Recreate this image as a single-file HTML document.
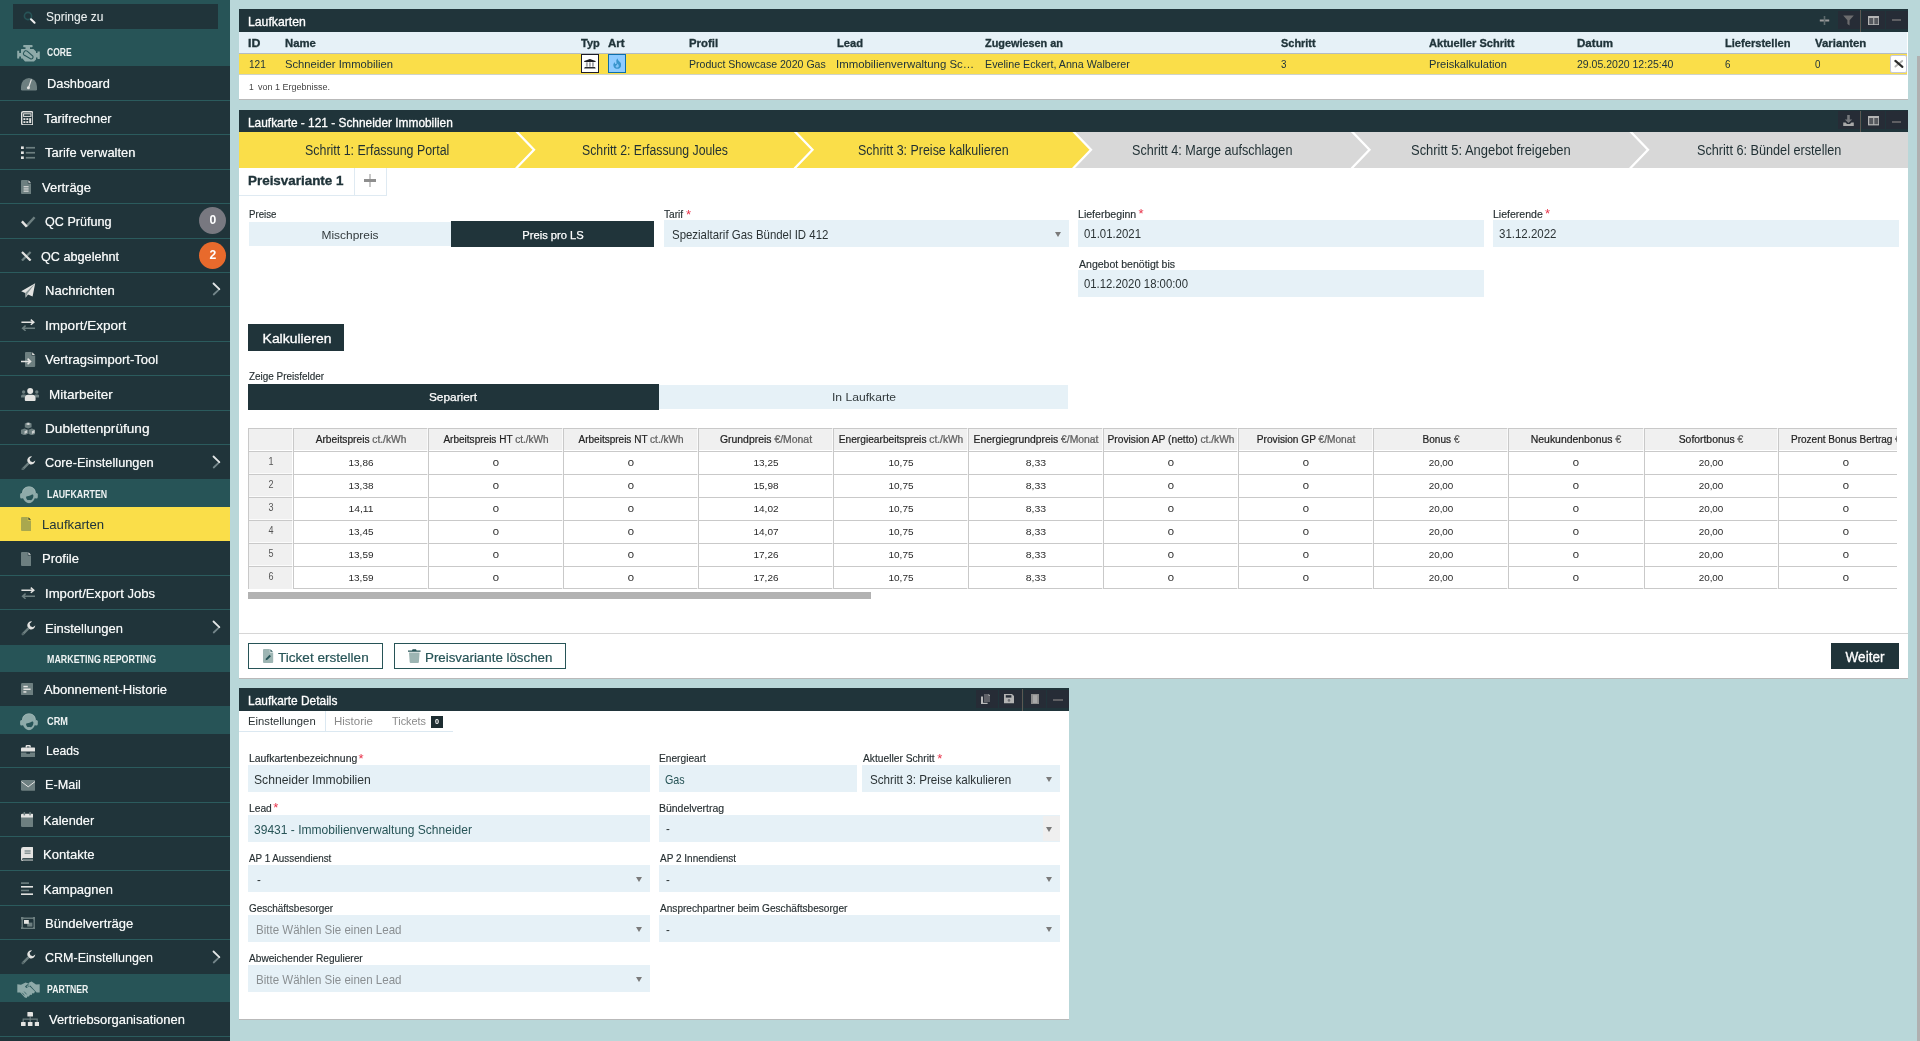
<!DOCTYPE html>
<html lang="de"><head><meta charset="utf-8"><title>Laufkarten</title><style>

html,body{margin:0;padding:0;}
body{width:1920px;height:1041px;overflow:hidden;background:#b9d7d9;font-family:"Liberation Sans",sans-serif;position:relative;}
#r{position:absolute;left:0;top:0;width:1920px;height:1041px;overflow:hidden;will-change:transform;}
#r div,#r svg,#r span.t{position:absolute;}
#r div{box-sizing:border-box;}
span.t{white-space:nowrap;line-height:1;display:block;}
span.g{color:#777;}
span.a{color:#e8334a;}

</style></head><body><div id="r">
<div style="left:0px;top:0px;width:230px;height:1041px;background:#20343a;"></div>
<div style="left:0px;top:0px;width:230px;height:66px;background:#275457;"></div>
<div style="left:13px;top:4px;width:205px;height:25px;background:#20343a;"></div>
<div style="left:0px;top:38px;width:230px;height:28px;background:#275457;"></div>
<div style="left:0px;top:99.5px;width:230px;height:1px;background:#2b5b5d;"></div>
<div style="left:0px;top:134px;width:230px;height:1px;background:#2b5b5d;"></div>
<div style="left:0px;top:168.5px;width:230px;height:1px;background:#2b5b5d;"></div>
<div style="left:0px;top:203px;width:230px;height:1px;background:#2b5b5d;"></div>
<div style="left:0px;top:237.5px;width:230px;height:1px;background:#2b5b5d;"></div>
<div style="left:0px;top:272px;width:230px;height:1px;background:#2b5b5d;"></div>
<div style="left:0px;top:306.25px;width:230px;height:1px;background:#2b5b5d;"></div>
<div style="left:0px;top:340.5px;width:230px;height:1px;background:#2b5b5d;"></div>
<div style="left:0px;top:375px;width:230px;height:1px;background:#2b5b5d;"></div>
<div style="left:0px;top:409.5px;width:230px;height:1px;background:#2b5b5d;"></div>
<div style="left:0px;top:444px;width:230px;height:1px;background:#2b5b5d;"></div>
<div style="left:0px;top:479.25px;width:230px;height:28px;background:#275457;"></div>
<div style="left:0px;top:507.25px;width:230px;height:33.95px;background:#fade49;"></div>
<div style="left:0px;top:574.75px;width:230px;height:1px;background:#2b5b5d;"></div>
<div style="left:0px;top:609.25px;width:230px;height:1px;background:#2b5b5d;"></div>
<div style="left:0px;top:644.5px;width:230px;height:27.75px;background:#275457;"></div>
<div style="left:0px;top:706.25px;width:230px;height:28px;background:#275457;"></div>
<div style="left:0px;top:767px;width:230px;height:1px;background:#2b5b5d;"></div>
<div style="left:0px;top:801.5px;width:230px;height:1px;background:#2b5b5d;"></div>
<div style="left:0px;top:836px;width:230px;height:1px;background:#2b5b5d;"></div>
<div style="left:0px;top:870.25px;width:230px;height:1px;background:#2b5b5d;"></div>
<div style="left:0px;top:904.5px;width:230px;height:1px;background:#2b5b5d;"></div>
<div style="left:0px;top:939.25px;width:230px;height:1px;background:#2b5b5d;"></div>
<div style="left:0px;top:974.25px;width:230px;height:28px;background:#275457;"></div>
<div style="left:0px;top:1036px;width:230px;height:1px;background:#2b5b5d;"></div>
<div style="left:199px;top:207px;width:27px;height:27px;border-radius:50%;background:#787880;"></div>
<div style="left:199px;top:241.5px;width:27px;height:27px;border-radius:50%;background:#e86a2c;"></div>
<div style="left:1917px;top:56px;width:3px;height:985px;background:#b0b0b0;"></div>
<div style="left:239px;top:9px;width:1669px;height:91px;background:#fff;border-bottom:1px solid #b9b9b9;"></div>
<div style="left:239px;top:9px;width:1669px;height:22.75px;background:#20343a;"></div>
<div style="left:1838px;top:11.25px;width:22px;height:17.7px;background:#262c36;"></div>
<div style="left:1860.4px;top:10px;width:1px;height:21.7px;background:#5c5853;"></div>
<div style="left:1861.5px;top:11.25px;width:23.5px;height:17.7px;background:#262c36;"></div>
<div style="left:1886px;top:11.25px;width:22px;height:17.7px;background:#262c36;"></div>
<div style="left:1892px;top:19.4px;width:9px;height:2px;background:#5f5f63;"></div>
<div style="left:239px;top:31.75px;width:1667.6px;height:22px;background:#e6f1f7;border-bottom:1px solid #b4bcc2;"></div>
<div style="left:239px;top:53.75px;width:1667.6px;height:21.25px;background:#fade49;border-bottom:1px solid #cfd3c9;"></div>
<div style="left:581px;top:54.2px;width:18px;height:18.6px;background:#fff;border:1px solid #1c1c26;"></div>
<div style="left:608px;top:54.2px;width:18px;height:18.6px;background:#8ecbff;border:1px solid #0d6eaa;"></div>
<div style="left:1889.5px;top:55.4px;width:17.5px;height:17.3px;background:#fff;border:1px solid #c6c9d8;border-radius:2px;"></div>
<div style="left:239px;top:110px;width:1669px;height:568.6px;background:#fff;border-bottom:1px solid #b9b9b9;"></div>
<div style="left:239px;top:110px;width:1669px;height:22px;background:#20343a;"></div>
<div style="left:1838px;top:111.4px;width:22px;height:17.4px;background:#262c36;"></div>
<div style="left:1860.4px;top:111px;width:1px;height:21px;background:#5c5853;"></div>
<div style="left:1861.5px;top:111.4px;width:23.5px;height:17.4px;background:#262c36;"></div>
<div style="left:1886px;top:111.4px;width:22px;height:17.4px;background:#262c36;"></div>
<div style="left:1892px;top:120.7px;width:9px;height:2px;background:#5f5f63;"></div>
<div style="left:239px;top:132px;width:835px;height:35.5px;background:#fade49;"></div>
<div style="left:1074px;top:132px;width:834px;height:35.5px;background:#d8d8d8;"></div>
<div style="left:239px;top:167.5px;width:115.5px;height:28.6px;background:#fff;border-right:1px solid #dfeaf2;border-bottom:1px solid #dfeaf2;"></div>
<div style="left:354.5px;top:167.5px;width:32px;height:28.6px;background:#fff;border-right:1px solid #dfeaf2;border-bottom:1px solid #dfeaf2;"></div>
<div style="left:368.8px;top:174.1px;width:2.6px;height:13px;background:#c8c8c8;"></div>
<div style="left:364px;top:178.9px;width:12.1px;height:3px;background:#8e8e8e;"></div>
<div style="left:249px;top:222px;width:202px;height:23.75px;background:#e6f1f7;"></div>
<div style="left:451px;top:220.75px;width:203px;height:26px;background:#20343a;"></div>
<div style="left:663.5px;top:220px;width:405.5px;height:26.8px;background:#e6f1f7;"></div>
<div style="left:1078px;top:220px;width:405.7px;height:26.8px;background:#e6f1f7;"></div>
<div style="left:1492.7px;top:220px;width:406.3px;height:26.8px;background:#e6f1f7;"></div>
<div style="left:1078px;top:269.9px;width:405.7px;height:26.9px;background:#e6f1f7;"></div>
<div style="left:248.25px;top:324.25px;width:95.75px;height:26.5px;background:#20343a;"></div>
<div style="left:248.25px;top:384.25px;width:410.75px;height:25.25px;background:#20343a;"></div>
<div style="left:659px;top:385.25px;width:409px;height:23.5px;background:#e6f1f7;"></div>
<div style="left:248px;top:428px;width:1649px;height:162px;overflow:hidden;"><div style="left:0;top:0.2px;width:1700px;height:21.7px;background:#f0f0f0;border-top:1px solid #c9c9c9;"></div><div style="left:0;top:23.8px;width:44.2px;height:137px;background:#f0f0f0;"></div><div style="left:0;top:23.2px;width:1700px;height:1px;background:#c9c9c9;"></div><div style="left:0;top:46.2px;width:1700px;height:1px;background:#c9c9c9;"></div><div style="left:0;top:45.2px;width:44.2px;height:1px;background:#fbfbfb;"></div><div style="left:0;top:69.3px;width:1700px;height:1px;background:#c9c9c9;"></div><div style="left:0;top:68.3px;width:44.2px;height:1px;background:#fbfbfb;"></div><div style="left:0;top:92.3px;width:1700px;height:1px;background:#c9c9c9;"></div><div style="left:0;top:91.3px;width:44.2px;height:1px;background:#fbfbfb;"></div><div style="left:0;top:115.4px;width:1700px;height:1px;background:#c9c9c9;"></div><div style="left:0;top:114.4px;width:44.2px;height:1px;background:#fbfbfb;"></div><div style="left:0;top:138.4px;width:1700px;height:1px;background:#c9c9c9;"></div><div style="left:0;top:137.4px;width:44.2px;height:1px;background:#fbfbfb;"></div><div style="left:0;top:160.4px;width:1700px;height:1px;background:#c9c9c9;"></div><div style="left:0;top:160.4px;width:45.2px;height:1px;background:#f0f0f0;"></div><div style="left:0.2px;top:0;width:1px;height:161px;background:#c9c9c9;"></div><div style="left:44.4px;top:0;width:1px;height:161.4px;background:rgba(255,255,255,.65);"></div><div style="left:45.4px;top:0;width:1px;height:161.4px;background:#c9c9c9;"></div><div style="left:179.3px;top:0;width:1px;height:161.4px;background:rgba(255,255,255,.65);"></div><div style="left:180.3px;top:0;width:1px;height:161.4px;background:#c9c9c9;"></div><div style="left:314.3px;top:0;width:1px;height:161.4px;background:rgba(255,255,255,.65);"></div><div style="left:315.3px;top:0;width:1px;height:161.4px;background:#c9c9c9;"></div><div style="left:449.3px;top:0;width:1px;height:161.4px;background:rgba(255,255,255,.65);"></div><div style="left:450.3px;top:0;width:1px;height:161.4px;background:#c9c9c9;"></div><div style="left:584.3px;top:0;width:1px;height:161.4px;background:rgba(255,255,255,.65);"></div><div style="left:585.3px;top:0;width:1px;height:161.4px;background:#c9c9c9;"></div><div style="left:719.2px;top:0;width:1px;height:161.4px;background:rgba(255,255,255,.65);"></div><div style="left:720.2px;top:0;width:1px;height:161.4px;background:#c9c9c9;"></div><div style="left:854.3px;top:0;width:1px;height:161.4px;background:rgba(255,255,255,.65);"></div><div style="left:855.3px;top:0;width:1px;height:161.4px;background:#c9c9c9;"></div><div style="left:989.4px;top:0;width:1px;height:161.4px;background:rgba(255,255,255,.65);"></div><div style="left:990.4px;top:0;width:1px;height:161.4px;background:#c9c9c9;"></div><div style="left:1124.3px;top:0;width:1px;height:161.4px;background:rgba(255,255,255,.65);"></div><div style="left:1125.3px;top:0;width:1px;height:161.4px;background:#c9c9c9;"></div><div style="left:1259.4px;top:0;width:1px;height:161.4px;background:rgba(255,255,255,.65);"></div><div style="left:1260.4px;top:0;width:1px;height:161.4px;background:#c9c9c9;"></div><div style="left:1394.5px;top:0;width:1px;height:161.4px;background:rgba(255,255,255,.65);"></div><div style="left:1395.5px;top:0;width:1px;height:161.4px;background:#c9c9c9;"></div><div style="left:1529.4px;top:0;width:1px;height:161.4px;background:rgba(255,255,255,.65);"></div><div style="left:1530.4px;top:0;width:1px;height:161.4px;background:#c9c9c9;"></div></div>
<div style="left:248px;top:591.5px;width:623px;height:7px;background:#b2b2b2;"></div>
<div style="left:239px;top:633px;width:1669px;height:1px;background:#d6d6d6;"></div>
<div style="left:248.25px;top:643.25px;width:134.5px;height:25.25px;background:#fff;border:1px solid #275457;"></div>
<div style="left:394.25px;top:643.25px;width:171.5px;height:25.25px;background:#fff;border:1px solid #275457;"></div>
<div style="left:1831.3px;top:643px;width:67.7px;height:25.5px;background:#20343a;"></div>
<div style="left:239px;top:688px;width:830px;height:331.7px;background:#fff;border-bottom:1px solid #b9b9b9;"></div>
<div style="left:239px;top:688px;width:830px;height:22.8px;background:#20343a;"></div>
<div style="left:976px;top:690.2px;width:22px;height:17.6px;background:#262c36;"></div>
<div style="left:999px;top:690.2px;width:23px;height:17.6px;background:#262c36;"></div>
<div style="left:1022.4px;top:689px;width:1px;height:21.8px;background:#5c5853;"></div>
<div style="left:1023.5px;top:690.2px;width:22.5px;height:17.6px;background:#262c36;"></div>
<div style="left:1047px;top:690.2px;width:22px;height:17.6px;background:#262c36;"></div>
<div style="left:1053px;top:698.6px;width:10px;height:2px;background:#5f5f63;"></div>
<div style="left:239px;top:710.8px;width:214px;height:21px;background:#fff;border-bottom:1px solid #dbe8f1;"></div>
<div style="left:325px;top:710.8px;width:1px;height:21px;background:#dbe8f1;"></div>
<div style="left:431px;top:716.2px;width:11.8px;height:11.6px;background:#1d2d31;"></div>
<div style="left:248.2px;top:765.3px;width:401.6px;height:26.5px;background:#e6f1f7;"></div>
<div style="left:659.1px;top:765.3px;width:197.9px;height:26.5px;background:#e6f1f7;"></div>
<div style="left:862px;top:765.3px;width:198px;height:26.5px;background:#e6f1f7;"></div>
<div style="left:248.2px;top:815px;width:401.6px;height:26.6px;background:#e6f1f7;"></div>
<div style="left:659.1px;top:815px;width:400.9px;height:26.6px;background:#e6f1f7;"></div>
<div style="left:1043px;top:816px;width:17px;height:25px;background:#efefef;"></div>
<div style="left:248.2px;top:864.8px;width:401.6px;height:26.8px;background:#e6f1f7;"></div>
<div style="left:659.1px;top:864.8px;width:400.9px;height:26.8px;background:#e6f1f7;"></div>
<div style="left:248.2px;top:915px;width:401.6px;height:26.5px;background:#e6f1f7;"></div>
<div style="left:659.1px;top:915px;width:400.9px;height:26.5px;background:#e6f1f7;"></div>
<div style="left:248.2px;top:965.1px;width:401.6px;height:26.5px;background:#e6f1f7;"></div>
<svg style="left:22px;top:10px;" width="16" height="16" viewBox="0 0 16 16"><circle cx="6" cy="6" r="3.6" fill="none" stroke="#275457" stroke-width="1.6"/><path d="M9 9.2 L12.6 12.8" stroke="#f0f0f0" stroke-width="2" stroke-linecap="round"/></svg>
<svg style="left:211.3px;top:281.2px;" width="12" height="16" viewBox="0 0 12 16"><path d="M8.4 8.2 L2.7 13.5" fill="none" stroke="#74868a" stroke-width="1.8" stroke-linecap="round"/><path d="M2.5 2.5 L8.3 8.1" fill="none" stroke="#e2e6e6" stroke-width="1.8" stroke-linecap="round"/></svg>
<svg style="left:211.3px;top:453.7px;" width="12" height="16" viewBox="0 0 12 16"><path d="M8.4 8.2 L2.7 13.5" fill="none" stroke="#74868a" stroke-width="1.8" stroke-linecap="round"/><path d="M2.5 2.5 L8.3 8.1" fill="none" stroke="#e2e6e6" stroke-width="1.8" stroke-linecap="round"/></svg>
<svg style="left:211.3px;top:619.2px;" width="12" height="16" viewBox="0 0 12 16"><path d="M8.4 8.2 L2.7 13.5" fill="none" stroke="#74868a" stroke-width="1.8" stroke-linecap="round"/><path d="M2.5 2.5 L8.3 8.1" fill="none" stroke="#e2e6e6" stroke-width="1.8" stroke-linecap="round"/></svg>
<svg style="left:211.3px;top:949.2px;" width="12" height="16" viewBox="0 0 12 16"><path d="M8.4 8.2 L2.7 13.5" fill="none" stroke="#74868a" stroke-width="1.8" stroke-linecap="round"/><path d="M2.5 2.5 L8.3 8.1" fill="none" stroke="#e2e6e6" stroke-width="1.8" stroke-linecap="round"/></svg>
<svg style="left:17px;top:45px;" width="23" height="17" viewBox="0 0 23 17"><g fill="#8eaaa9"><rect x="6.2" y="0" width="9.4" height="2.3" rx=".7"/><rect x="8.5" y="2" width="4.5" height="2.2"/><path d="M4.5 4 H16.5 L19 6.5 V8 H20.5 V6.5 H22.8 V14 H20.5 V12.5 H19 V14.5 L17 16.5 H8 L5.5 13.5 H4 V11.5 H2.2 V13.5 H0.2 V5.8 H2.2 V8 H4 V4.5Z"/></g><path d="M7 7.2 a2 2 0 0 1 3.2 -1 L15.8 11 a2 2 0 0 1 -2 3 L8 10.6 A2 2 0 0 1 7 7.2Z" fill="none" stroke="#275457" stroke-width="1.1"/></svg>
<svg style="left:19.5px;top:485.5px;" width="18" height="18" viewBox="0 0 18 18"><g fill="#8eaaa9"><path d="M9 0.4 C4.6 0.4 2 3.4 2 7.6 C2 12 5 17.2 9 17.2 C13 17.2 15.8 12 15.8 7.6 C15.8 3.4 13.4 0.4 9 0.4Z"/><rect x="0.1" y="7" width="3.2" height="5.6" rx="1.5"/><rect x="14.6" y="7" width="3.2" height="5.6" rx="1.5"/></g><path d="M9 0.9 C5 0.9 2.8 3.4 2.6 7" fill="none" stroke="#a6bcbb" stroke-width=".6"/><path d="M9 0.9 C13 0.9 15 3.4 15.2 7" fill="none" stroke="#a6bcbb" stroke-width=".6"/><path d="M6 10.8 C7.6 9.8 9.6 10 11.6 8.7 C12.6 8.2 13.4 8.7 13.4 9.8 C13.4 12.2 11.6 14.9 9.4 14.9 C7.4 14.9 6 12.8 6 10.8Z" fill="#275457"/><ellipse cx="9.1" cy="15.4" rx="2.3" ry="1.35" fill="#8eaaa9"/></svg>
<svg style="left:19.5px;top:712.5px;" width="18" height="18" viewBox="0 0 18 18"><g fill="#8eaaa9"><path d="M9 0.4 C4.6 0.4 2 3.4 2 7.6 C2 12 5 17.2 9 17.2 C13 17.2 15.8 12 15.8 7.6 C15.8 3.4 13.4 0.4 9 0.4Z"/><rect x="0.1" y="7" width="3.2" height="5.6" rx="1.5"/><rect x="14.6" y="7" width="3.2" height="5.6" rx="1.5"/></g><path d="M9 0.9 C5 0.9 2.8 3.4 2.6 7" fill="none" stroke="#a6bcbb" stroke-width=".6"/><path d="M9 0.9 C13 0.9 15 3.4 15.2 7" fill="none" stroke="#a6bcbb" stroke-width=".6"/><path d="M6 10.8 C7.6 9.8 9.6 10 11.6 8.7 C12.6 8.2 13.4 8.7 13.4 9.8 C13.4 12.2 11.6 14.9 9.4 14.9 C7.4 14.9 6 12.8 6 10.8Z" fill="#275457"/><ellipse cx="9.1" cy="15.4" rx="2.3" ry="1.35" fill="#8eaaa9"/></svg>
<svg style="left:17px;top:980.5px;" width="23" height="18" viewBox="0 0 23 18"><g fill="#8eaaa9"><path d="M0.3 3.2 L4 3.8 L8.6 1.6 L11.4 2.6 L8 5.6 L9.2 7 L12.6 5.2 L18 10.6 L17 12.4 L15.6 12 L14.6 14 L13 13.8 L12 15.6 L10.4 15.4 L9.6 17 L7.8 16.6 L3.2 11.4 L0.3 11.6Z"/><path d="M12.2 1.4 L14.6 0.6 L19 3.6 L22.7 3.2 V11.6 L19.6 11.4 L13.2 4.6 L10 6.2 L9.4 5.6Z"/></g><path d="M9.4 5.6 L12.2 3.4 M5.2 11.8 L7.4 14.4 M7.2 10.6 L9.6 13.4" stroke="#275457" stroke-width=".7" fill="none"/></svg>
<svg style="left:21px;top:77px;" width="16" height="13.5" viewBox="0 0 16 13.5"><path d="M0 9.6 A8 8.6 0 0 1 16 9.6 V12.2 A1.2 1.2 0 0 1 14.8 13.4 H1.2 A1.2 1.2 0 0 1 0 12.2Z" fill="#6d7f80"/><path d="M10.4 2.4 L7.6 10.6" stroke="#e4e4e2" stroke-width="1.2"/><circle cx="7.4" cy="10.8" r="1.5" fill="#e4e4e2"/></svg>
<svg style="left:20.8px;top:110.8px;" width="12.6" height="14.6" viewBox="0 0 12.6 14.6"><rect x=".7" y=".7" width="11.2" height="13.2" rx="1.4" fill="#20343a" stroke="#e4e4e2" stroke-width="1.4"/><rect x="2.6" y="2.8" width="7.4" height="2.6" fill="#20343a" stroke="#e4e4e2" stroke-width="1"/><g fill="#e4e4e2"><rect x="2.4" y="7.2" width="2" height="1.8"/><rect x="5.3" y="7.2" width="2" height="1.8"/><rect x="8.2" y="7.2" width="2" height="4.8"/><rect x="2.4" y="10.2" width="2" height="1.8"/><rect x="5.3" y="10.2" width="2" height="1.8"/></g></svg>
<svg style="left:21px;top:146px;" width="14.4" height="13.4" viewBox="0 0 14.4 13.4"><g fill="#e4e4e2"><rect x="0" y="0.4" width="2.8" height="2.6"/><rect x="0" y="5.4" width="2.8" height="2.6"/><rect x="0" y="10.4" width="2.8" height="2.6"/></g><g fill="#6d7f80"><rect x="4.8" y="0.9" width="9.4" height="1.7"/><rect x="4.8" y="5.9" width="9.4" height="1.7"/><rect x="4.8" y="10.9" width="9.4" height="1.7"/></g></svg>
<svg style="left:21px;top:180px;" width="10.4" height="14.2" viewBox="0 0 10.4 14.2"><path d="M1 0 H6.8 V3.4 H10.2 V13 A1 1 0 0 1 9.2 14 H1 A1 1 0 0 1 0 13 V1 A1 1 0 0 1 1 0Z" fill="#6d7f80"/><path d="M7.4 0.2 L10 2.8 H7.4Z" fill="#e4e4e2"/><g fill="#e4e4e2"><rect x="2.6" y="6.2" width="5" height="1.1"/><rect x="2.6" y="8.4" width="5" height="1.1"/><rect x="2.6" y="10.6" width="5" height="1.1"/></g></svg>
<svg style="left:21px;top:215.6px;" width="14.6" height="12" viewBox="0 0 14.6 12"><path d="M5.2 10.4 L13.6 1.2" stroke="#6d7f80" stroke-width="2.4" fill="none"/><path d="M0.9 5.4 L5.8 10.6" stroke="#e4e4e2" stroke-width="2.4" fill="none"/></svg>
<svg style="left:21px;top:250.8px;" width="10.6" height="10.6" viewBox="0 0 10.6 10.6"><path d="M9.6 1 L1 9.6" stroke="#6d7f80" stroke-width="2.2"/><path d="M1 1 L9.6 9.6" stroke="#e4e4e2" stroke-width="2.2"/></svg>
<svg style="left:21px;top:282.6px;" width="14.6" height="15.4" viewBox="0 0 14.6 15.4"><path d="M14.2 0.2 L0.2 8.2 L4.2 10 L4.6 14.8 L7 11.4 L11.6 13.4Z" fill="#e4e4e2"/><path d="M14.2 0.2 L4.2 10 L4.6 14.8 L6.4 10.8Z" fill="#6d7f80" opacity=".75"/></svg>
<svg style="left:21px;top:319px;" width="14.4" height="12.4" viewBox="0 0 14.4 12.4"><path d="M0.4 3.2 H12.4 M9.8 0.6 L12.8 3.2 L9.8 5.8" stroke="#e4e4e2" stroke-width="1.5" fill="none"/><path d="M14 9.2 H2 M4.6 6.6 L1.6 9.2 L4.6 11.8" stroke="#6d7f80" stroke-width="1.5" fill="none"/></svg>
<svg style="left:21px;top:352px;" width="14.6" height="15" viewBox="0 0 14.6 15"><path d="M5 0 H10.6 V3.6 H14.2 V14 A1 1 0 0 1 13.2 15 H5 A1 1 0 0 1 4 14 V1 A1 1 0 0 1 5 0Z" fill="#6d7f80"/><path d="M11.2 0.2 L14 3 H11.2Z" fill="#e4e4e2"/><path d="M0 9.4 H9 M6.6 6.6 L9.6 9.4 L6.6 12.2" stroke="#e4e4e2" stroke-width="1.5" fill="none"/></svg>
<svg style="left:21px;top:387.6px;" width="18.4" height="13" viewBox="0 0 18.4 13"><g fill="#6d7f80"><circle cx="2.6" cy="4" r="1.7"/><circle cx="15.8" cy="4" r="1.7"/><path d="M0 9.4 V8.2 A1.8 1.8 0 0 1 1.8 6.4 H4.6 V9.4Z"/><path d="M18.4 9.4 V8.2 A1.8 1.8 0 0 0 16.6 6.4 H13.8 V9.4Z"/></g><g fill="#e4e4e2"><circle cx="9.2" cy="3.1" r="3"/><path d="M3.8 12 V10.2 A3.4 3.4 0 0 1 7.2 6.8 H11.2 A3.4 3.4 0 0 1 14.6 10.2 V12 A1 1 0 0 1 13.6 13 H4.8 A1 1 0 0 1 3.8 12Z"/></g></svg>
<svg style="left:21px;top:421.8px;" width="14.4" height="13.6" viewBox="0 0 14.4 13.6"><g fill="#6d7f80"><path d="M7.2 0 L10.6 1.4 V5.2 L7.2 6.6 L3.8 5.2 V1.4Z"/><path d="M3.5 6.4 L7 7.8 V11.8 L3.5 13.4 L0 11.8 V7.8Z"/><path d="M10.9 6.4 L14.4 7.8 V11.8 L10.9 13.4 L7.4 11.8 V7.8Z"/></g><g fill="#e4e4e2"><path d="M7.2 1 L9.6 2 L7.2 3 L4.8 2Z"/><path d="M3.5 9.2 L6.2 8 V10.8 L3.5 12Z" opacity=".8"/><path d="M10.9 9.2 L13.6 8 V10.8 L10.9 12Z" opacity=".8"/></g></svg>
<svg style="left:21px;top:455.6px;" width="14.6" height="14.8" viewBox="0 0 14.6 14.8"><path d="M7.6 5.6 L9.2 7.2 L2.6 13.9 A1.15 1.15 0 0 1 0.9 12.3Z" fill="#6d7f80"/><circle cx="2" cy="12.9" r=".6" fill="#20343a"/><path d="M10.2 0.3 A4.2 4.2 0 0 0 6.4 5.6 L8.8 8.2 A4.2 4.2 0 0 0 14.3 4.4 L11.8 6.2 L9.4 5.2 L8.6 2.8 L11 0.4Z" fill="#e4e4e2"/></svg>
<svg style="left:21px;top:517px;" width="10.4" height="14.2" viewBox="0 0 10.4 14.2"><path d="M1 0 H6.8 V3.4 H10.2 V13 A1 1 0 0 1 9.2 14 H1 A1 1 0 0 1 0 13 V1 A1 1 0 0 1 1 0Z" fill="#a9a84e"/><path d="M7.4 0.2 L10 2.8 H7.4Z" fill="#20343a"/></svg>
<svg style="left:21px;top:552px;" width="10.4" height="14.2" viewBox="0 0 10.4 14.2"><path d="M1 0 H6.8 V3.4 H10.2 V13 A1 1 0 0 1 9.2 14 H1 A1 1 0 0 1 0 13 V1 A1 1 0 0 1 1 0Z" fill="#6d7f80"/><path d="M7.4 0.2 L10 2.8 H7.4Z" fill="#e4e4e2"/></svg>
<svg style="left:21px;top:586.8px;" width="14.4" height="12.4" viewBox="0 0 14.4 12.4"><path d="M0.4 3.2 H12.4 M9.8 0.6 L12.8 3.2 L9.8 5.8" stroke="#e4e4e2" stroke-width="1.5" fill="none"/><path d="M14 9.2 H2 M4.6 6.6 L1.6 9.2 L4.6 11.8" stroke="#6d7f80" stroke-width="1.5" fill="none"/></svg>
<svg style="left:21px;top:621px;" width="14.6" height="14.8" viewBox="0 0 14.6 14.8"><path d="M7.6 5.6 L9.2 7.2 L2.6 13.9 A1.15 1.15 0 0 1 0.9 12.3Z" fill="#6d7f80"/><circle cx="2" cy="12.9" r=".6" fill="#20343a"/><path d="M10.2 0.3 A4.2 4.2 0 0 0 6.4 5.6 L8.8 8.2 A4.2 4.2 0 0 0 14.3 4.4 L11.8 6.2 L9.4 5.2 L8.6 2.8 L11 0.4Z" fill="#e4e4e2"/></svg>
<svg style="left:21px;top:683px;" width="12.4" height="12.4" viewBox="0 0 12.4 12.4"><rect width="12.4" height="12.4" rx="1.4" fill="#6d7f80"/><g fill="#e4e4e2"><rect x="2.4" y="2.8" width="4.4" height="1.5"/><rect x="2.4" y="5.5" width="7.2" height="1.5"/><rect x="2.4" y="8.2" width="3" height="1.5"/></g></svg>
<svg style="left:21px;top:744.6px;" width="14.4" height="12.6" viewBox="0 0 14.4 12.6"><path d="M4.6 2.6 V1.2 A1.2 1.2 0 0 1 5.8 0 H8.6 A1.2 1.2 0 0 1 9.8 1.2 V2.6 H8.4 V1.4 H6 V2.6Z" fill="#e4e4e2"/><path d="M1.2 2.6 H13.2 A1.2 1.2 0 0 1 14.4 3.8 V6.6 H0 V3.8 A1.2 1.2 0 0 1 1.2 2.6Z" fill="#e4e4e2"/><path d="M0 7.6 H5.4 V8.8 H9 V7.6 H14.4 V11.4 A1.2 1.2 0 0 1 13.2 12.6 H1.2 A1.2 1.2 0 0 1 0 11.4Z" fill="#6d7f80"/></svg>
<svg style="left:21px;top:779.8px;" width="14.4" height="10.8" viewBox="0 0 14.4 10.8"><rect width="14.4" height="10.8" rx="1.2" fill="#6d7f80"/><path d="M0.4 1.6 L7.2 6.8 L14 1.6" fill="none" stroke="#e4e4e2" stroke-width="1"/></svg>
<svg style="left:21px;top:812px;" width="12.4" height="15" viewBox="0 0 12.4 15"><rect x="0" y="4.6" width="12.4" height="10.4" rx="1.2" fill="#6d7f80"/><path d="M0 5.4 V3 A1.2 1.2 0 0 1 1.2 1.8 H11.2 A1.2 1.2 0 0 1 12.4 3 V5.4Z" fill="#e4e4e2"/><rect x="2.6" y="0" width="1.5" height="3.4" fill="#6d7f80"/><rect x="8.3" y="0" width="1.5" height="3.4" fill="#6d7f80"/></svg>
<svg style="left:21px;top:847px;" width="12.4" height="14.4" viewBox="0 0 12.4 14.4"><path d="M2.4 0 H11.4 A1 1 0 0 1 12.4 1 V11 H2.4 A1.2 1.2 0 0 0 2.4 13.4 H12.4 V14.4 H2.4 A2.4 2.4 0 0 1 0 12 V2.4 A2.4 2.4 0 0 1 2.4 0Z" fill="#e4e4e2"/><rect x="3.6" y="3.4" width="6" height="1.2" fill="#6d7f80"/><rect x="3.6" y="5.6" width="6" height="1.2" fill="#6d7f80"/><rect x="1.8" y="11.6" width="10.6" height="1.4" fill="#6d7f80"/></svg>
<svg style="left:21px;top:882px;" width="12.4" height="13.4" viewBox="0 0 12.4 13.4"><rect x="0" y="0.3" width="8" height="1.6" fill="#6d7f80"/><rect x="0" y="4" width="12.2" height="1.6" fill="#e4e4e2"/><rect x="0" y="7.7" width="8" height="1.6" fill="#6d7f80"/><rect x="0" y="11.4" width="12.2" height="1.6" fill="#e4e4e2"/></svg>
<svg style="left:21px;top:916.8px;" width="14.4" height="12.6" viewBox="0 0 14.4 12.6"><rect x="1.2" y="1.2" width="12" height="10.2" fill="none" stroke="#6d7f80" stroke-width="1.4"/><g fill="#6d7f80"><rect width="2.4" height="2.4"/><rect x="12" width="2.4" height="2.4"/><rect y="10.2" width="2.4" height="2.4"/><rect x="12" y="10.2" width="2.4" height="2.4"/><rect x="6.2" y="5.6" width="5.2" height="4"/></g><rect x="3" y="3" width="4.8" height="3.8" fill="#e4e4e2"/></svg>
<svg style="left:21px;top:950.4px;" width="14.6" height="14.8" viewBox="0 0 14.6 14.8"><path d="M7.6 5.6 L9.2 7.2 L2.6 13.9 A1.15 1.15 0 0 1 0.9 12.3Z" fill="#6d7f80"/><circle cx="2" cy="12.9" r=".6" fill="#20343a"/><path d="M10.2 0.3 A4.2 4.2 0 0 0 6.4 5.6 L8.8 8.2 A4.2 4.2 0 0 0 14.3 4.4 L11.8 6.2 L9.4 5.2 L8.6 2.8 L11 0.4Z" fill="#e4e4e2"/></svg>
<svg style="left:21px;top:1012px;" width="18.4" height="14.4" viewBox="0 0 18.4 14.4"><path d="M9.2 4.4 V10 M2.2 10 V7.2 H16.2 V10" fill="none" stroke="#6d7f80" stroke-width="1.2"/><g fill="#e4e4e2"><rect x="6.4" y="0" width="5.6" height="4.4" rx=".5"/><rect x="0" y="10" width="4.6" height="4" rx=".5"/><rect x="6.9" y="10" width="4.6" height="4" rx=".5"/><rect x="13.8" y="10" width="4.6" height="4" rx=".5"/></g></svg>
<svg style="left:1819px;top:15px;" width="11" height="11" viewBox="0 0 11 11"><path d="M0.8 5.5 H10.2" stroke="#9a9a9a" stroke-width="2"/><path d="M5.5 1 V10" stroke="#5d6a6c" stroke-width="1.6"/></svg>
<svg style="left:1842.5px;top:14.6px;" width="11" height="11" viewBox="0 0 11 11"><path d="M0.2 0.4 H10.8 L6.6 5.2 V10.6 L4.4 9 V5.2Z" fill="#6c6c6e"/></svg>
<svg style="left:1867.8px;top:15.5px;" width="11.4" height="9.4" viewBox="0 0 11.4 9.4"><rect x=".6" y=".6" width="10.2" height="8.2" fill="#55585e" stroke="#b5b5b5" stroke-width="1.2"/><rect x=".6" y=".4" width="10.2" height="1.6" fill="#b5b5b5"/><rect x="5.2" y="1" width="1.1" height="8" fill="#b5b5b5"/></svg>
<svg style="left:584.2px;top:58.8px;" width="11.8" height="9.8" viewBox="0 0 11.8 9.8"><path d="M5.9 0 L11.6 1.9 V2.9 H0.2 V1.9Z" fill="#1d1d24"/><g fill="#a9a9ad"><rect x="1.9" y="3.3" width="1.9" height="4.4"/><rect x="4.95" y="3.3" width="1.9" height="4.4"/><rect x="8" y="3.3" width="1.9" height="4.4"/></g><path d="M1 7.9 H10.8 L11.6 9.1 V9.6 H0.2 V9.1Z" fill="#2a2a30"/></svg>
<svg style="left:612.9px;top:57.8px;" width="8.6" height="11" viewBox="0 0 8.6 11"><path d="M4.6 0.2 C4.4 2 6.4 3 7.6 4.8 C8.8 6.8 8.2 9.2 6.2 10.4 C4.4 11.2 2.2 10.8 1 9.2 C-0.2 7.4 0.4 5.2 1.8 4 C1.6 5.2 2.2 6 3 6 C4.2 5.8 3 3.6 3.4 2.2 C3.6 1.4 4 0.8 4.6 0.2Z" fill="#2f8fc6" opacity=".9"/><path d="M4.4 5.4 C5.2 6.2 6 7 5.8 8.2 C5.6 9.2 4.8 9.6 4 9.6 C3 9.6 2.4 8.8 2.6 8 C2.8 7.4 3.4 7.6 3.8 7 C4.2 6.4 4.2 6 4.4 5.4Z" fill="#8ecbff" opacity=".85"/></svg>
<svg style="left:1893.5px;top:59.3px;" width="10" height="9" viewBox="0 0 10 9"><path d="M8.2 1.9 L1.4 7.6" stroke="#b2b2b2" stroke-width="1.9" stroke-linecap="round"/><path d="M1.4 1.9 L8.4 7.9" stroke="#2a2a2a" stroke-width="2.1" stroke-linecap="round"/></svg>
<svg style="left:1842.5px;top:115px;" width="11" height="11.4" viewBox="0 0 11 11.4"><path d="M4.2 0 H6.8 V4.4 H9.2 L5.5 8 L1.8 4.4 H4.2Z" fill="#77797d"/><path d="M0.2 7.6 H2.6 L4 9 H7 L8.4 7.6 H10.8 V11.2 H0.2Z" fill="#a8a8a8"/></svg>
<svg style="left:1867.8px;top:116.3px;" width="11.4" height="9.4" viewBox="0 0 11.4 9.4"><rect x=".6" y=".6" width="10.2" height="8.2" fill="#55585e" stroke="#b5b5b5" stroke-width="1.2"/><rect x=".6" y=".4" width="10.2" height="1.6" fill="#b5b5b5"/><rect x="5.2" y="1" width="1.1" height="8" fill="#b5b5b5"/></svg>
<svg style="left:239px;top:132px" width="1669" height="35.5" viewBox="0 0 1669 35.5"><path d="M833 -1 H835 L852 17.75 L835 36.5 H833Z" fill="#fade49"/><path d="M277 -1 L295 17.75 L277 36.5" fill="none" stroke="#fff" stroke-width="2.3"/><path d="M555.5 -1 L573.5 17.75 L555.5 36.5" fill="none" stroke="#fff" stroke-width="2.3"/><path d="M834 -1 L852 17.75 L834 36.5" fill="none" stroke="#fff" stroke-width="2.3"/><path d="M1112.5 -1 L1130.5 17.75 L1112.5 36.5" fill="none" stroke="#fff" stroke-width="2.3"/><path d="M1391 -1 L1409 17.75 L1391 36.5" fill="none" stroke="#fff" stroke-width="2.3"/></svg>
<svg style="left:1054.8px;top:232px;" width="6" height="5" viewBox="0 0 6 5"><path d="M0 0 H6 L3 5Z" fill="#7a7a7a"/></svg>
<svg style="left:263.2px;top:649.2px;" width="10.4" height="14" viewBox="0 0 10.4 14"><path d="M1 0 H6.8 V3.4 H10.2 V13 A1 1 0 0 1 9.2 14 H1 A1 1 0 0 1 0 13 V1 A1 1 0 0 1 1 0Z" fill="#9db5b3"/><path d="M7.4 0.2 L10 2.8 H7.4Z" fill="#275457"/><path d="M2.6 11.2 L3 9.4 L6.6 5.8 L8 7.2 L4.4 10.8Z" fill="#275457"/></svg>
<svg style="left:408.2px;top:649.4px;" width="12.6" height="14" viewBox="0 0 12.6 14"><path d="M0 1.4 H4 L4.6 0.2 H8 L8.6 1.4 H12.6 V2.8 H0Z" fill="#275457"/><path d="M1 3.6 H11.6 L10.9 13 A1 1 0 0 1 9.9 14 H2.7 A1 1 0 0 1 1.7 13Z" fill="#9db5b3"/></svg>
<svg style="left:980.6px;top:693.8px;" width="9.8" height="10.4" viewBox="0 0 9.8 10.4"><path d="M0 2.6 H2 V8.8 H6.6 V10.4 H0Z" fill="#b9b9b9"/><path d="M3 0 H7.6 L9.4 1.8 V8 H3Z" fill="#5f6167"/><path d="M7.6 0 L9.4 1.8 H7.6Z" fill="#d0d0d0"/></svg>
<svg style="left:1004px;top:694.4px;" width="10.2" height="9.2" viewBox="0 0 10.2 9.2"><path d="M0 0 H8 L10.2 2.2 V9.2 H0Z" fill="#b3b3b3"/><rect x="1.8" y="1.2" width="5.6" height="2.4" fill="#262c36"/><circle cx="5" cy="6.4" r="1.3" fill="#6c6e72"/></svg>
<svg style="left:1031px;top:694px;" width="8.2" height="10.2" viewBox="0 0 8.2 10.2"><rect width="8.2" height="10.2" fill="#8d8d8d"/><rect x="2" y="1.2" width="4.2" height="7.8" fill="#a8a8a8"/></svg>
<svg style="left:1046px;top:777px;" width="6" height="5" viewBox="0 0 6 5"><path d="M0 0 H6 L3 5Z" fill="#7a7a7a"/></svg>
<svg style="left:1046.4px;top:826.8px;" width="6" height="5" viewBox="0 0 6 5"><path d="M0 0 H6 L3 5Z" fill="#7a7a7a"/></svg>
<svg style="left:636px;top:876.8px;" width="6" height="5" viewBox="0 0 6 5"><path d="M0 0 H6 L3 5Z" fill="#7a7a7a"/></svg>
<svg style="left:1046.2px;top:876.8px;" width="6" height="5" viewBox="0 0 6 5"><path d="M0 0 H6 L3 5Z" fill="#7a7a7a"/></svg>
<svg style="left:636px;top:926.9px;" width="6" height="5" viewBox="0 0 6 5"><path d="M0 0 H6 L3 5Z" fill="#7a7a7a"/></svg>
<svg style="left:1046.2px;top:926.9px;" width="6" height="5" viewBox="0 0 6 5"><path d="M0 0 H6 L3 5Z" fill="#7a7a7a"/></svg>
<svg style="left:636px;top:977px;" width="6" height="5" viewBox="0 0 6 5"><path d="M0 0 H6 L3 5Z" fill="#7a7a7a"/></svg>
<span class="t" style="left:45.9554px;top:10.89px;font-size:12.5px;color:#e8eeee;transform-origin:0 50%;transform:scaleX(0.9594);text-shadow:0 0 1px rgba(255,255,255,.35);">Springe zu</span>
<span class="t" style="left:47.4494px;top:48.31px;font-size:10.4px;color:#eef3f3;font-weight:700;transform-origin:0 50%;transform:scaleX(0.8220);">CORE</span>
<span class="t" style="left:46.9458px;top:77.49px;font-size:13px;color:#f4f7f7;transform-origin:0 50%;transform:scaleX(0.9886);text-shadow:0 0 .7px rgba(255,255,255,.8);">Dashboard</span>
<span class="t" style="left:43.7129px;top:111.99px;font-size:13px;color:#f4f7f7;transform-origin:0 50%;transform:scaleX(0.9834);text-shadow:0 0 .7px rgba(255,255,255,.8);">Tarifrechner</span>
<span class="t" style="left:44.91px;top:146.49px;font-size:13px;color:#f4f7f7;transform-origin:0 50%;transform:scaleX(0.9932);text-shadow:0 0 .7px rgba(255,255,255,.8);">Tarife verwalten</span>
<span class="t" style="left:41.743px;top:180.99px;font-size:13px;color:#f4f7f7;transform-origin:0 50%;transform:scaleX(0.9975);text-shadow:0 0 .7px rgba(255,255,255,.8);">Verträge</span>
<span class="t" style="left:45.4026px;top:215.49px;font-size:13px;color:#f4f7f7;transform-origin:0 50%;transform:scaleX(0.9702);text-shadow:0 0 .7px rgba(255,255,255,.8);">QC Prüfung</span>
<span class="t" style="left:41.2007px;top:249.59px;font-size:13px;color:#f4f7f7;transform-origin:0 50%;transform:scaleX(0.9733);text-shadow:0 0 .7px rgba(255,255,255,.8);">QC abgelehnt</span>
<span class="t" style="left:45.4283px;top:284.37px;font-size:13px;color:#f4f7f7;transform-origin:0 50%;transform:scaleX(1.0050);text-shadow:0 0 .7px rgba(255,255,255,.8);">Nachrichten</span>
<span class="t" style="left:45.2493px;top:318.62px;font-size:13px;color:#f4f7f7;transform-origin:0 50%;transform:scaleX(1.0425);text-shadow:0 0 .7px rgba(255,255,255,.8);">Import/Export</span>
<span class="t" style="left:45.4426px;top:352.99px;font-size:13px;color:#f4f7f7;transform-origin:0 50%;transform:scaleX(1.0045);text-shadow:0 0 .7px rgba(255,255,255,.8);">Vertragsimport-Tool</span>
<span class="t" style="left:48.8917px;top:388.39px;font-size:13px;color:#f4f7f7;transform-origin:0 50%;transform:scaleX(1.0392);text-shadow:0 0 .7px rgba(255,255,255,.8);">Mitarbeiter</span>
<span class="t" style="left:45.3829px;top:421.99px;font-size:13px;color:#f4f7f7;transform-origin:0 50%;transform:scaleX(1.0476);text-shadow:0 0 .7px rgba(255,255,255,.8);">Dublettenprüfung</span>
<span class="t" style="left:45.3512px;top:456.37px;font-size:13px;color:#f4f7f7;transform-origin:0 50%;transform:scaleX(0.9828);text-shadow:0 0 .7px rgba(255,255,255,.8);">Core-Einstellungen</span>
<span class="t" style="left:47.2103px;top:489.56px;font-size:10.4px;color:#eef3f3;font-weight:700;transform-origin:0 50%;transform:scaleX(0.8477);">LAUFKARTEN</span>
<span class="t" style="left:41.7215px;top:518.07px;font-size:13px;color:#20343a;transform-origin:0 50%;transform:scaleX(1.0113);">Laufkarten</span>
<span class="t" style="left:41.728px;top:552.32px;font-size:13px;color:#f4f7f7;transform-origin:0 50%;transform:scaleX(1.0052);text-shadow:0 0 .7px rgba(255,255,255,.8);">Profile</span>
<span class="t" style="left:45.2885px;top:587.24px;font-size:13px;color:#f4f7f7;transform-origin:0 50%;transform:scaleX(1.0099);text-shadow:0 0 .7px rgba(255,255,255,.8);">Import/Export Jobs</span>
<span class="t" style="left:45.4357px;top:621.62px;font-size:13px;color:#f4f7f7;transform-origin:0 50%;transform:scaleX(0.9980);text-shadow:0 0 .7px rgba(255,255,255,.8);">Einstellungen</span>
<span class="t" style="left:47.2048px;top:654.69px;font-size:10.4px;color:#eef3f3;font-weight:700;transform-origin:0 50%;transform:scaleX(0.8555);">MARKETING REPORTING</span>
<span class="t" style="left:44.4744px;top:683.49px;font-size:13px;color:#f4f7f7;transform-origin:0 50%;transform:scaleX(1.0080);text-shadow:0 0 .7px rgba(255,255,255,.8);">Abonnement-Historie</span>
<span class="t" style="left:47.4217px;top:716.56px;font-size:10.4px;color:#eef3f3;font-weight:700;transform-origin:0 50%;transform:scaleX(0.8869);">CRM</span>
<span class="t" style="left:45.5024px;top:744.07px;font-size:13px;color:#f4f7f7;transform-origin:0 50%;transform:scaleX(0.9355);text-shadow:0 0 .7px rgba(255,255,255,.8);">Leads</span>
<span class="t" style="left:45.4613px;top:778.09px;font-size:13px;color:#f4f7f7;transform-origin:0 50%;transform:scaleX(0.9740);text-shadow:0 0 .7px rgba(255,255,255,.8);">E-Mail</span>
<span class="t" style="left:43.4497px;top:813.99px;font-size:13px;color:#f4f7f7;transform-origin:0 50%;transform:scaleX(0.9849);text-shadow:0 0 .7px rgba(255,255,255,.8);">Kalender</span>
<span class="t" style="left:43.4268px;top:848.37px;font-size:13px;color:#f4f7f7;transform-origin:0 50%;transform:scaleX(1.0064);text-shadow:0 0 .7px rgba(255,255,255,.8);">Kontakte</span>
<span class="t" style="left:43.4369px;top:882.62px;font-size:13px;color:#f4f7f7;transform-origin:0 50%;transform:scaleX(0.9969);text-shadow:0 0 .7px rgba(255,255,255,.8);">Kampagnen</span>
<span class="t" style="left:45.4315px;top:917.12px;font-size:13px;color:#f4f7f7;transform-origin:0 50%;transform:scaleX(1.0020);text-shadow:0 0 .7px rgba(255,255,255,.8);">Bündelverträge</span>
<span class="t" style="left:45.3637px;top:951.49px;font-size:13px;color:#f4f7f7;transform-origin:0 50%;transform:scaleX(0.9638);text-shadow:0 0 .7px rgba(255,255,255,.8);">CRM-Einstellungen</span>
<span class="t" style="left:47.2196px;top:984.56px;font-size:10.4px;color:#eef3f3;font-weight:700;transform-origin:0 50%;transform:scaleX(0.8343);">PARTNER</span>
<span class="t" style="left:49.4432px;top:1012.67px;font-size:13px;color:#f4f7f7;transform-origin:0 50%;transform:scaleX(0.9949);text-shadow:0 0 .7px rgba(255,255,255,.8);">Vertriebsorganisationen</span>
<span class="t" style="left:212.6px;top:214.34px;font-size:12.8px;color:#fff;font-weight:700;transform:translateX(-50%) scaleX(0.9500);">0</span>
<span class="t" style="left:212.6px;top:248.84px;font-size:12.8px;color:#fff;font-weight:700;transform:translateX(-50%) scaleX(0.9500);">2</span>
<span class="t" style="left:247.996px;top:16.58px;font-size:11.9px;color:#fff;transform-origin:0 50%;transform:scaleX(1.0284);-webkit-text-stroke:.3px #fff;">Laufkarten</span>
<span class="t" style="left:247.674px;top:38.07px;font-size:10.5px;color:#20343a;font-weight:700;transform-origin:0 50%;transform:scaleX(1.1756);-webkit-text-stroke:.3px #20343a;">ID</span>
<span class="t" style="left:284.743px;top:38.07px;font-size:10.5px;color:#20343a;font-weight:700;transform-origin:0 50%;transform:scaleX(1.0781);-webkit-text-stroke:.3px #20343a;">Name</span>
<span class="t" style="left:581.376px;top:38.07px;font-size:10.5px;color:#20343a;font-weight:700;transform-origin:0 50%;transform:scaleX(1.0495);-webkit-text-stroke:.3px #20343a;">Typ</span>
<span class="t" style="left:608.213px;top:38.07px;font-size:10.5px;color:#20343a;font-weight:700;transform-origin:0 50%;transform:scaleX(1.0959);-webkit-text-stroke:.3px #20343a;">Art</span>
<span class="t" style="left:688.739px;top:38.07px;font-size:10.5px;color:#20343a;font-weight:700;transform-origin:0 50%;transform:scaleX(1.0828);-webkit-text-stroke:.3px #20343a;">Profil</span>
<span class="t" style="left:836.756px;top:38.07px;font-size:10.5px;color:#20343a;font-weight:700;transform-origin:0 50%;transform:scaleX(1.0596);-webkit-text-stroke:.3px #20343a;">Lead</span>
<span class="t" style="left:985.176px;top:38.07px;font-size:10.5px;color:#20343a;font-weight:700;transform-origin:0 50%;transform:scaleX(1.0361);-webkit-text-stroke:.3px #20343a;">Zugewiesen an</span>
<span class="t" style="left:1281.18px;top:38.07px;font-size:10.5px;color:#20343a;font-weight:700;transform-origin:0 50%;transform:scaleX(1.0416);-webkit-text-stroke:.3px #20343a;">Schritt</span>
<span class="t" style="left:1429.22px;top:38.07px;font-size:10.5px;color:#20343a;font-weight:700;transform-origin:0 50%;transform:scaleX(1.0530);-webkit-text-stroke:.3px #20343a;">Aktueller Schritt</span>
<span class="t" style="left:1576.73px;top:38.07px;font-size:10.5px;color:#20343a;font-weight:700;transform-origin:0 50%;transform:scaleX(1.1016);-webkit-text-stroke:.3px #20343a;">Datum</span>
<span class="t" style="left:1724.76px;top:38.07px;font-size:10.5px;color:#20343a;font-weight:700;transform-origin:0 50%;transform:scaleX(1.0577);-webkit-text-stroke:.3px #20343a;">Lieferstellen</span>
<span class="t" style="left:1815.22px;top:38.07px;font-size:10.5px;color:#20343a;font-weight:700;transform-origin:0 50%;transform:scaleX(1.0847);-webkit-text-stroke:.3px #20343a;">Varianten</span>
<span class="t" style="left:248.629px;top:58.67px;font-size:10.9px;color:#20343a;transform-origin:0 50%;transform:scaleX(0.9281);">121</span>
<span class="t" style="left:284.99px;top:58.67px;font-size:10.9px;color:#20343a;transform-origin:0 50%;transform:scaleX(1.0306);">Schneider Immobilien</span>
<span class="t" style="left:688.633px;top:58.67px;font-size:10.9px;color:#20343a;transform-origin:0 50%;transform:scaleX(0.9694);">Product Showcase 2020 Gas</span>
<span class="t" style="left:836.447px;top:58.67px;font-size:10.9px;color:#20343a;transform-origin:0 50%;transform:scaleX(1.0466);">Immobilienverwaltung Sc…</span>
<span class="t" style="left:984.621px;top:58.67px;font-size:10.9px;color:#20343a;transform-origin:0 50%;transform:scaleX(0.9828);">Eveline Eckert, Anna Walberer</span>
<span class="t" style="left:1281.13px;top:58.67px;font-size:10.9px;color:#20343a;transform-origin:0 50%;transform:scaleX(0.9000);">3</span>
<span class="t" style="left:1428.59px;top:58.67px;font-size:10.9px;color:#20343a;transform-origin:0 50%;transform:scaleX(1.0204);">Preiskalkulation</span>
<span class="t" style="left:1576.97px;top:58.67px;font-size:10.9px;color:#20343a;transform-origin:0 50%;transform:scaleX(0.9650);">29.05.2020 12:25:40</span>
<span class="t" style="left:1725px;top:58.67px;font-size:10.9px;color:#20343a;transform-origin:0 50%;transform:scaleX(0.9000);">6</span>
<span class="t" style="left:1815.12px;top:58.67px;font-size:10.9px;color:#20343a;transform-origin:0 50%;transform:scaleX(0.9000);">0</span>
<span class="t" style="left:248.656px;top:82.95px;font-size:8.9px;color:#444;transform-origin:0 50%;transform:scaleX(0.9500);">1</span>
<span class="t" style="left:258.269px;top:82.95px;font-size:8.9px;color:#444;transform-origin:0 50%;transform:scaleX(1.0128);">von 1 Ergebnisse.</span>
<span class="t" style="left:248.025px;top:117.58px;font-size:11.9px;color:#fff;transform-origin:0 50%;transform:scaleX(0.9993);-webkit-text-stroke:.3px #fff;">Laufkarte - 121 - Schneider Immobilien</span>
<span class="t" style="left:304.936px;top:143.15px;font-size:14px;color:#1f2f33;transform-origin:0 50%;transform:scaleX(0.8878);">Schritt 1: Erfassung Portal</span>
<span class="t" style="left:582.143px;top:143.15px;font-size:14px;color:#1f2f33;transform-origin:0 50%;transform:scaleX(0.8767);">Schritt 2: Erfassung Joules</span>
<span class="t" style="left:858.435px;top:143.15px;font-size:14px;color:#1f2f33;transform-origin:0 50%;transform:scaleX(0.8882);">Schritt 3: Preise kalkulieren</span>
<span class="t" style="left:1132.13px;top:143.15px;font-size:14px;color:#1f2f33;transform-origin:0 50%;transform:scaleX(0.9000);">Schritt 4: Marge aufschlagen</span>
<span class="t" style="left:1411.11px;top:143.15px;font-size:14px;color:#1f2f33;transform-origin:0 50%;transform:scaleX(0.9244);">Schritt 5: Angebot freigeben</span>
<span class="t" style="left:1697.42px;top:143.15px;font-size:14px;color:#1f2f33;transform-origin:0 50%;transform:scaleX(0.9051);">Schritt 6: Bündel erstellen</span>
<span class="t" style="left:247.602px;top:174.15px;font-size:13.5px;color:#20343a;font-weight:700;transform-origin:0 50%;transform:scaleX(0.9938);-webkit-text-stroke:.35px #20343a;">Preisvariante 1</span>
<span class="t" style="left:248.707px;top:209.91px;font-size:10px;color:#273033;transform-origin:0 50%;transform:scaleX(0.9670);-webkit-text-stroke:.15px #273033;">Preise</span>
<span class="t" style="left:349.8px;top:230.13px;font-size:11.8px;color:#333b3e;transform:translateX(-50%) scaleX(1.0128);">Mischpreis</span>
<span class="t" style="left:552.7px;top:230.13px;font-size:11.8px;color:#fff;transform:translateX(-50%) scaleX(0.9462);-webkit-text-stroke:.25px #fff;">Preis pro LS</span>
<span class="t" style="left:664.272px;top:209.91px;font-size:10px;color:#273033;transform-origin:0 50%;transform:scaleX(1.0162);-webkit-text-stroke:.15px #273033;">Tarif</span>
<span class="t" style="left:685.891px;top:207.54px;font-size:13px;color:#e8334a;transform-origin:0 50%;transform:scaleX(1.0000);">*</span>
<span class="t" style="left:672.18px;top:229.34px;font-size:12.6px;color:#2b3335;transform-origin:0 50%;transform:scaleX(0.9081);">Spezialtarif Gas Bündel ID 412</span>
<span class="t" style="left:1078.43px;top:209.51px;font-size:10px;color:#273033;transform-origin:0 50%;transform:scaleX(1.0583);-webkit-text-stroke:.15px #273033;">Lieferbeginn</span>
<span class="t" style="left:1138.39px;top:207.14px;font-size:13px;color:#e8334a;transform-origin:0 50%;transform:scaleX(1.0000);">*</span>
<span class="t" style="left:1084.3px;top:228.24px;font-size:12.6px;color:#2b3335;transform-origin:0 50%;transform:scaleX(0.9043);">01.01.2021</span>
<span class="t" style="left:1493.14px;top:209.51px;font-size:10px;color:#273033;transform-origin:0 50%;transform:scaleX(1.0543);-webkit-text-stroke:.15px #273033;">Lieferende</span>
<span class="t" style="left:1544.89px;top:207.14px;font-size:13px;color:#e8334a;transform-origin:0 50%;transform:scaleX(1.0000);">*</span>
<span class="t" style="left:1498.96px;top:228.24px;font-size:12.6px;color:#2b3335;transform-origin:0 50%;transform:scaleX(0.9109);">31.12.2022</span>
<span class="t" style="left:1079.28px;top:259.51px;font-size:10px;color:#273033;transform-origin:0 50%;transform:scaleX(1.0539);-webkit-text-stroke:.15px #273033;">Angebot benötigt bis</span>
<span class="t" style="left:1084.31px;top:278.04px;font-size:12.6px;color:#2b3335;transform-origin:0 50%;transform:scaleX(0.8998);">01.12.2020 18:00:00</span>
<span class="t" style="left:296.6px;top:331.70px;font-size:13.7px;color:#fff;transform:translateX(-50%) scaleX(1.0159);-webkit-text-stroke:.3px #fff;">Kalkulieren</span>
<span class="t" style="left:249.185px;top:371.81px;font-size:10px;color:#273033;transform-origin:0 50%;transform:scaleX(0.9919);-webkit-text-stroke:.15px #273033;">Zeige Preisfelder</span>
<span class="t" style="left:452.8px;top:391.68px;font-size:11.8px;color:#fff;transform:translateX(-50%) scaleX(1.0052);-webkit-text-stroke:.25px #fff;">Separiert</span>
<span class="t" style="left:863.7px;top:391.68px;font-size:11.8px;color:#333b3e;transform:translateX(-50%) scaleX(1.0297);">In Laufkarte</span>
<span class="t" style="left:361.15px;top:435.01px;font-size:10px;color:#222;transform:translateX(-50%) scaleX(1.0198);-webkit-text-stroke:.2px #222;">Arbeitspreis <span class="g">ct./kWh</span></span>
<span class="t" style="left:496.1px;top:435.01px;font-size:10px;color:#222;transform:translateX(-50%) scaleX(1.0030);-webkit-text-stroke:.2px #222;">Arbeitspreis HT <span class="g">ct./kWh</span></span>
<span class="t" style="left:631.1px;top:435.01px;font-size:10px;color:#222;transform:translateX(-50%) scaleX(1.0011);-webkit-text-stroke:.2px #222;">Arbeitspreis NT <span class="g">ct./kWh</span></span>
<span class="t" style="left:766.1px;top:435.01px;font-size:10px;color:#222;transform:translateX(-50%) scaleX(1.0420);-webkit-text-stroke:.2px #222;">Grundpreis <span class="g">€/Monat</span></span>
<span class="t" style="left:901.05px;top:435.01px;font-size:10px;color:#222;transform:translateX(-50%) scaleX(1.0181);-webkit-text-stroke:.2px #222;">Energiearbeitspreis <span class="g">ct./kWh</span></span>
<span class="t" style="left:1036.05px;top:435.01px;font-size:10px;color:#222;transform:translateX(-50%) scaleX(1.0355);-webkit-text-stroke:.2px #222;">Energiegrundpreis <span class="g">€/Monat</span></span>
<span class="t" style="left:1171.15px;top:435.01px;font-size:10px;color:#222;transform:translateX(-50%) scaleX(1.0215);-webkit-text-stroke:.2px #222;">Provision AP (netto) <span class="g">ct./kWh</span></span>
<span class="t" style="left:1306.15px;top:435.01px;font-size:10px;color:#222;transform:translateX(-50%) scaleX(1.0135);-webkit-text-stroke:.2px #222;">Provision GP <span class="g">€/Monat</span></span>
<span class="t" style="left:1441.15px;top:435.01px;font-size:10px;color:#222;transform:translateX(-50%) scaleX(1.0072);-webkit-text-stroke:.2px #222;">Bonus <span class="g">€</span></span>
<span class="t" style="left:1576.25px;top:435.01px;font-size:10px;color:#222;transform:translateX(-50%) scaleX(1.0433);-webkit-text-stroke:.2px #222;">Neukundenbonus <span class="g">€</span></span>
<span class="t" style="left:1711.25px;top:435.01px;font-size:10px;color:#222;transform:translateX(-50%) scaleX(1.0375);-webkit-text-stroke:.2px #222;">Sofortbonus <span class="g">€</span></span>
<span class="t" style="left:1791.08px;top:435.01px;font-size:10px;color:#222;transform-origin:0 50%;transform:scaleX(1.0023);-webkit-text-stroke:.2px #222;">Prozent Bonus Bertrag <span class="g">€</span></span>
<span class="t" style="left:270.6px;top:457.01px;font-size:10px;color:#555;transform:translateX(-50%) scaleX(0.9000);">1</span>
<span class="t" style="left:361.15px;top:457.80px;font-size:9.4px;color:#2a2a2a;transform:translateX(-50%) scaleX(1.0654);">13,86</span>
<span class="t" style="left:496.1px;top:457.80px;font-size:9.4px;color:#2a2a2a;transform:translateX(-50%) scaleX(1.2042);">0</span>
<span class="t" style="left:631.1px;top:457.80px;font-size:9.4px;color:#2a2a2a;transform:translateX(-50%) scaleX(1.2042);">0</span>
<span class="t" style="left:766.1px;top:457.80px;font-size:9.4px;color:#2a2a2a;transform:translateX(-50%) scaleX(1.0645);">13,25</span>
<span class="t" style="left:901.05px;top:457.80px;font-size:9.4px;color:#2a2a2a;transform:translateX(-50%) scaleX(1.0645);">10,75</span>
<span class="t" style="left:1036.05px;top:457.80px;font-size:9.4px;color:#2a2a2a;transform:translateX(-50%) scaleX(1.1189);">8,33</span>
<span class="t" style="left:1171.15px;top:457.80px;font-size:9.4px;color:#2a2a2a;transform:translateX(-50%) scaleX(1.2042);">0</span>
<span class="t" style="left:1306.15px;top:457.80px;font-size:9.4px;color:#2a2a2a;transform:translateX(-50%) scaleX(1.2042);">0</span>
<span class="t" style="left:1441.15px;top:457.80px;font-size:9.4px;color:#2a2a2a;transform:translateX(-50%) scaleX(1.0518);">20,00</span>
<span class="t" style="left:1576.25px;top:457.80px;font-size:9.4px;color:#2a2a2a;transform:translateX(-50%) scaleX(1.2042);">0</span>
<span class="t" style="left:1711.25px;top:457.80px;font-size:9.4px;color:#2a2a2a;transform:translateX(-50%) scaleX(1.0518);">20,00</span>
<span class="t" style="left:1846.25px;top:457.80px;font-size:9.4px;color:#2a2a2a;transform:translateX(-50%) scaleX(1.2042);">0</span>
<span class="t" style="left:270.6px;top:480.01px;font-size:10px;color:#555;transform:translateX(-50%) scaleX(0.9000);">2</span>
<span class="t" style="left:361.15px;top:480.80px;font-size:9.4px;color:#2a2a2a;transform:translateX(-50%) scaleX(1.0652);">13,38</span>
<span class="t" style="left:496.1px;top:480.80px;font-size:9.4px;color:#2a2a2a;transform:translateX(-50%) scaleX(1.2042);">0</span>
<span class="t" style="left:631.1px;top:480.80px;font-size:9.4px;color:#2a2a2a;transform:translateX(-50%) scaleX(1.2042);">0</span>
<span class="t" style="left:766.1px;top:480.80px;font-size:9.4px;color:#2a2a2a;transform:translateX(-50%) scaleX(1.0652);">15,98</span>
<span class="t" style="left:901.05px;top:480.80px;font-size:9.4px;color:#2a2a2a;transform:translateX(-50%) scaleX(1.0645);">10,75</span>
<span class="t" style="left:1036.05px;top:480.80px;font-size:9.4px;color:#2a2a2a;transform:translateX(-50%) scaleX(1.1189);">8,33</span>
<span class="t" style="left:1171.15px;top:480.80px;font-size:9.4px;color:#2a2a2a;transform:translateX(-50%) scaleX(1.2042);">0</span>
<span class="t" style="left:1306.15px;top:480.80px;font-size:9.4px;color:#2a2a2a;transform:translateX(-50%) scaleX(1.2042);">0</span>
<span class="t" style="left:1441.15px;top:480.80px;font-size:9.4px;color:#2a2a2a;transform:translateX(-50%) scaleX(1.0518);">20,00</span>
<span class="t" style="left:1576.25px;top:480.80px;font-size:9.4px;color:#2a2a2a;transform:translateX(-50%) scaleX(1.2042);">0</span>
<span class="t" style="left:1711.25px;top:480.80px;font-size:9.4px;color:#2a2a2a;transform:translateX(-50%) scaleX(1.0518);">20,00</span>
<span class="t" style="left:1846.25px;top:480.80px;font-size:9.4px;color:#2a2a2a;transform:translateX(-50%) scaleX(1.2042);">0</span>
<span class="t" style="left:270.6px;top:503.11px;font-size:10px;color:#555;transform:translateX(-50%) scaleX(0.9000);">3</span>
<span class="t" style="left:361.15px;top:503.90px;font-size:9.4px;color:#2a2a2a;transform:translateX(-50%) scaleX(1.1023);">14,11</span>
<span class="t" style="left:496.1px;top:503.90px;font-size:9.4px;color:#2a2a2a;transform:translateX(-50%) scaleX(1.2042);">0</span>
<span class="t" style="left:631.1px;top:503.90px;font-size:9.4px;color:#2a2a2a;transform:translateX(-50%) scaleX(1.2042);">0</span>
<span class="t" style="left:766.1px;top:503.90px;font-size:9.4px;color:#2a2a2a;transform:translateX(-50%) scaleX(1.0682);">14,02</span>
<span class="t" style="left:901.05px;top:503.90px;font-size:9.4px;color:#2a2a2a;transform:translateX(-50%) scaleX(1.0645);">10,75</span>
<span class="t" style="left:1036.05px;top:503.90px;font-size:9.4px;color:#2a2a2a;transform:translateX(-50%) scaleX(1.1189);">8,33</span>
<span class="t" style="left:1171.15px;top:503.90px;font-size:9.4px;color:#2a2a2a;transform:translateX(-50%) scaleX(1.2042);">0</span>
<span class="t" style="left:1306.15px;top:503.90px;font-size:9.4px;color:#2a2a2a;transform:translateX(-50%) scaleX(1.2042);">0</span>
<span class="t" style="left:1441.15px;top:503.90px;font-size:9.4px;color:#2a2a2a;transform:translateX(-50%) scaleX(1.0518);">20,00</span>
<span class="t" style="left:1576.25px;top:503.90px;font-size:9.4px;color:#2a2a2a;transform:translateX(-50%) scaleX(1.2042);">0</span>
<span class="t" style="left:1711.25px;top:503.90px;font-size:9.4px;color:#2a2a2a;transform:translateX(-50%) scaleX(1.0518);">20,00</span>
<span class="t" style="left:1846.25px;top:503.90px;font-size:9.4px;color:#2a2a2a;transform:translateX(-50%) scaleX(1.2042);">0</span>
<span class="t" style="left:270.6px;top:526.11px;font-size:10px;color:#555;transform:translateX(-50%) scaleX(0.9000);">4</span>
<span class="t" style="left:361.15px;top:526.90px;font-size:9.4px;color:#2a2a2a;transform:translateX(-50%) scaleX(1.0645);">13,45</span>
<span class="t" style="left:496.1px;top:526.90px;font-size:9.4px;color:#2a2a2a;transform:translateX(-50%) scaleX(1.2042);">0</span>
<span class="t" style="left:631.1px;top:526.90px;font-size:9.4px;color:#2a2a2a;transform:translateX(-50%) scaleX(1.2042);">0</span>
<span class="t" style="left:766.1px;top:526.90px;font-size:9.4px;color:#2a2a2a;transform:translateX(-50%) scaleX(1.0682);">14,07</span>
<span class="t" style="left:901.05px;top:526.90px;font-size:9.4px;color:#2a2a2a;transform:translateX(-50%) scaleX(1.0645);">10,75</span>
<span class="t" style="left:1036.05px;top:526.90px;font-size:9.4px;color:#2a2a2a;transform:translateX(-50%) scaleX(1.1189);">8,33</span>
<span class="t" style="left:1171.15px;top:526.90px;font-size:9.4px;color:#2a2a2a;transform:translateX(-50%) scaleX(1.2042);">0</span>
<span class="t" style="left:1306.15px;top:526.90px;font-size:9.4px;color:#2a2a2a;transform:translateX(-50%) scaleX(1.2042);">0</span>
<span class="t" style="left:1441.15px;top:526.90px;font-size:9.4px;color:#2a2a2a;transform:translateX(-50%) scaleX(1.0518);">20,00</span>
<span class="t" style="left:1576.25px;top:526.90px;font-size:9.4px;color:#2a2a2a;transform:translateX(-50%) scaleX(1.2042);">0</span>
<span class="t" style="left:1711.25px;top:526.90px;font-size:9.4px;color:#2a2a2a;transform:translateX(-50%) scaleX(1.0518);">20,00</span>
<span class="t" style="left:1846.25px;top:526.90px;font-size:9.4px;color:#2a2a2a;transform:translateX(-50%) scaleX(1.2042);">0</span>
<span class="t" style="left:270.6px;top:549.21px;font-size:10px;color:#555;transform:translateX(-50%) scaleX(0.9000);">5</span>
<span class="t" style="left:361.15px;top:550.00px;font-size:9.4px;color:#2a2a2a;transform:translateX(-50%) scaleX(1.0669);">13,59</span>
<span class="t" style="left:496.1px;top:550.00px;font-size:9.4px;color:#2a2a2a;transform:translateX(-50%) scaleX(1.2042);">0</span>
<span class="t" style="left:631.1px;top:550.00px;font-size:9.4px;color:#2a2a2a;transform:translateX(-50%) scaleX(1.2042);">0</span>
<span class="t" style="left:766.1px;top:550.00px;font-size:9.4px;color:#2a2a2a;transform:translateX(-50%) scaleX(1.0654);">17,26</span>
<span class="t" style="left:901.05px;top:550.00px;font-size:9.4px;color:#2a2a2a;transform:translateX(-50%) scaleX(1.0645);">10,75</span>
<span class="t" style="left:1036.05px;top:550.00px;font-size:9.4px;color:#2a2a2a;transform:translateX(-50%) scaleX(1.1189);">8,33</span>
<span class="t" style="left:1171.15px;top:550.00px;font-size:9.4px;color:#2a2a2a;transform:translateX(-50%) scaleX(1.2042);">0</span>
<span class="t" style="left:1306.15px;top:550.00px;font-size:9.4px;color:#2a2a2a;transform:translateX(-50%) scaleX(1.2042);">0</span>
<span class="t" style="left:1441.15px;top:550.00px;font-size:9.4px;color:#2a2a2a;transform:translateX(-50%) scaleX(1.0518);">20,00</span>
<span class="t" style="left:1576.25px;top:550.00px;font-size:9.4px;color:#2a2a2a;transform:translateX(-50%) scaleX(1.2042);">0</span>
<span class="t" style="left:1711.25px;top:550.00px;font-size:9.4px;color:#2a2a2a;transform:translateX(-50%) scaleX(1.0518);">20,00</span>
<span class="t" style="left:1846.25px;top:550.00px;font-size:9.4px;color:#2a2a2a;transform:translateX(-50%) scaleX(1.2042);">0</span>
<span class="t" style="left:270.6px;top:572.21px;font-size:10px;color:#555;transform:translateX(-50%) scaleX(0.9000);">6</span>
<span class="t" style="left:361.15px;top:573.00px;font-size:9.4px;color:#2a2a2a;transform:translateX(-50%) scaleX(1.0669);">13,59</span>
<span class="t" style="left:496.1px;top:573.00px;font-size:9.4px;color:#2a2a2a;transform:translateX(-50%) scaleX(1.2042);">0</span>
<span class="t" style="left:631.1px;top:573.00px;font-size:9.4px;color:#2a2a2a;transform:translateX(-50%) scaleX(1.2042);">0</span>
<span class="t" style="left:766.1px;top:573.00px;font-size:9.4px;color:#2a2a2a;transform:translateX(-50%) scaleX(1.0654);">17,26</span>
<span class="t" style="left:901.05px;top:573.00px;font-size:9.4px;color:#2a2a2a;transform:translateX(-50%) scaleX(1.0645);">10,75</span>
<span class="t" style="left:1036.05px;top:573.00px;font-size:9.4px;color:#2a2a2a;transform:translateX(-50%) scaleX(1.1189);">8,33</span>
<span class="t" style="left:1171.15px;top:573.00px;font-size:9.4px;color:#2a2a2a;transform:translateX(-50%) scaleX(1.2042);">0</span>
<span class="t" style="left:1306.15px;top:573.00px;font-size:9.4px;color:#2a2a2a;transform:translateX(-50%) scaleX(1.2042);">0</span>
<span class="t" style="left:1441.15px;top:573.00px;font-size:9.4px;color:#2a2a2a;transform:translateX(-50%) scaleX(1.0518);">20,00</span>
<span class="t" style="left:1576.25px;top:573.00px;font-size:9.4px;color:#2a2a2a;transform:translateX(-50%) scaleX(1.2042);">0</span>
<span class="t" style="left:1711.25px;top:573.00px;font-size:9.4px;color:#2a2a2a;transform:translateX(-50%) scaleX(1.0518);">20,00</span>
<span class="t" style="left:1846.25px;top:573.00px;font-size:9.4px;color:#2a2a2a;transform:translateX(-50%) scaleX(1.2042);">0</span>
<span class="t" style="left:277.945px;top:650.65px;font-size:13.3px;color:#275457;transform-origin:0 50%;transform:scaleX(1.0197);-webkit-text-stroke:.2px #275457;">Ticket erstellen</span>
<span class="t" style="left:424.906px;top:650.65px;font-size:13.3px;color:#275457;transform-origin:0 50%;transform:scaleX(1.0025);-webkit-text-stroke:.2px #275457;">Preisvariante löschen</span>
<span class="t" style="left:1865.3px;top:649.66px;font-size:14.6px;color:#fff;transform:translateX(-50%) scaleX(0.9279);-webkit-text-stroke:.3px #fff;">Weiter</span>
<span class="t" style="left:248.022px;top:695.58px;font-size:11.9px;color:#fff;transform-origin:0 50%;transform:scaleX(1.0020);-webkit-text-stroke:.3px #fff;">Laufkarte Details</span>
<span class="t" style="left:247.775px;top:715.73px;font-size:11.4px;color:#2b3335;transform-origin:0 50%;transform:scaleX(0.9890);">Einstellungen</span>
<span class="t" style="left:333.857px;top:715.73px;font-size:11.4px;color:#8a8a8a;transform-origin:0 50%;transform:scaleX(1.0085);">Historie</span>
<span class="t" style="left:392.056px;top:715.73px;font-size:11.4px;color:#8a8a8a;transform-origin:0 50%;transform:scaleX(0.9546);">Tickets</span>
<span class="t" style="left:436.9px;top:718.29px;font-size:8px;color:#fff;font-weight:700;transform:translateX(-50%) scaleX(0.9000);">0</span>
<span class="t" style="left:248.646px;top:754.06px;font-size:10px;color:#273033;transform-origin:0 50%;transform:scaleX(1.0408);-webkit-text-stroke:.15px #273033;">Laufkartenbezeichnung</span>
<span class="t" style="left:358.591px;top:751.69px;font-size:13px;color:#e8334a;transform-origin:0 50%;transform:scaleX(1.0000);">*</span>
<span class="t" style="left:254.248px;top:774.04px;font-size:12.8px;color:#2b3335;transform-origin:0 50%;transform:scaleX(0.9494);">Schneider Immobilien</span>
<span class="t" style="left:659.166px;top:754.06px;font-size:10px;color:#273033;transform-origin:0 50%;transform:scaleX(1.0166);-webkit-text-stroke:.15px #273033;">Energieart</span>
<span class="t" style="left:664.859px;top:774.04px;font-size:12.8px;color:#275457;transform-origin:0 50%;transform:scaleX(0.8401);">Gas</span>
<span class="t" style="left:863.18px;top:754.06px;font-size:10px;color:#273033;transform-origin:0 50%;transform:scaleX(1.0238);-webkit-text-stroke:.15px #273033;">Aktueller Schritt</span>
<span class="t" style="left:937.191px;top:751.69px;font-size:13px;color:#e8334a;transform-origin:0 50%;transform:scaleX(1.0000);">*</span>
<span class="t" style="left:870.271px;top:774.04px;font-size:12.8px;color:#2b3335;transform-origin:0 50%;transform:scaleX(0.9105);">Schritt 3: Preise kalkulieren</span>
<span class="t" style="left:248.659px;top:803.86px;font-size:10px;color:#273033;transform-origin:0 50%;transform:scaleX(1.0248);-webkit-text-stroke:.15px #273033;">Lead</span>
<span class="t" style="left:273.191px;top:801.49px;font-size:13px;color:#e8334a;transform-origin:0 50%;transform:scaleX(1.0000);">*</span>
<span class="t" style="left:254.142px;top:823.84px;font-size:12.8px;color:#275457;transform-origin:0 50%;transform:scaleX(0.9399);">39431 - Immobilienverwaltung Schneider</span>
<span class="t" style="left:659.142px;top:803.86px;font-size:10px;color:#273033;transform-origin:0 50%;transform:scaleX(1.0460);-webkit-text-stroke:.15px #273033;">Bündelvertrag</span>
<span class="t" style="left:666.488px;top:823.44px;font-size:12.8px;color:#2b3335;transform-origin:0 50%;transform:scaleX(0.9000);">-</span>
<span class="t" style="left:249.481px;top:853.96px;font-size:10px;color:#273033;transform-origin:0 50%;transform:scaleX(0.9824);-webkit-text-stroke:.15px #273033;">AP 1 Aussendienst</span>
<span class="t" style="left:256.888px;top:873.64px;font-size:12.8px;color:#2b3335;transform-origin:0 50%;transform:scaleX(0.9000);">-</span>
<span class="t" style="left:659.98px;top:853.96px;font-size:10px;color:#273033;transform-origin:0 50%;transform:scaleX(1.0012);-webkit-text-stroke:.15px #273033;">AP 2 Innendienst</span>
<span class="t" style="left:666.488px;top:873.64px;font-size:12.8px;color:#2b3335;transform-origin:0 50%;transform:scaleX(0.9000);">-</span>
<span class="t" style="left:248.999px;top:903.76px;font-size:10px;color:#273033;transform-origin:0 50%;transform:scaleX(0.9961);-webkit-text-stroke:.15px #273033;">Geschäftsbesorger</span>
<span class="t" style="left:256.354px;top:923.84px;font-size:12.8px;color:#8a8f92;transform-origin:0 50%;transform:scaleX(0.9009);">Bitte Wählen Sie einen Lead</span>
<span class="t" style="left:659.98px;top:903.76px;font-size:10px;color:#273033;transform-origin:0 50%;transform:scaleX(1.0093);-webkit-text-stroke:.15px #273033;">Ansprechpartner beim Geschäftsbesorger</span>
<span class="t" style="left:666.488px;top:923.64px;font-size:12.8px;color:#2b3335;transform-origin:0 50%;transform:scaleX(0.9000);">-</span>
<span class="t" style="left:249.48px;top:953.86px;font-size:10px;color:#273033;transform-origin:0 50%;transform:scaleX(1.0124);-webkit-text-stroke:.15px #273033;">Abweichender Regulierer</span>
<span class="t" style="left:256.354px;top:973.84px;font-size:12.8px;color:#8a8f92;transform-origin:0 50%;transform:scaleX(0.9009);">Bitte Wählen Sie einen Lead</span>
<div style="left:1897px;top:428px;width:11px;height:163px;background:#fff;"></div>
</div></body></html>
